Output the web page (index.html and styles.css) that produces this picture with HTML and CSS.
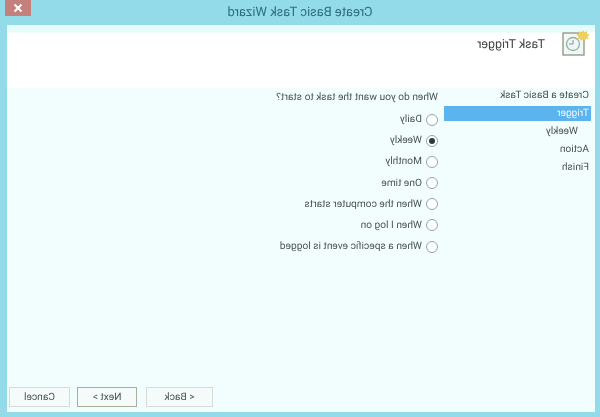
FILE: index.html
```html
<!DOCTYPE html>
<html>
<head>
  <title>Create Basic Task Wizard</title>
  <link rel="stylesheet" href="styles.css">
</head>
<body>
  <!-- The screenshot is a mirrored window, so the whole thing gets flipped -->
  <div class="window">
    <div class="titlebar">
      <span class="title">Create Basic Task Wizard</span>
      <div class="close">
        <svg width="10" height="10" viewBox="0 0 10 10">
          <path d="M1.5 1.5 L8.5 8.5 M8.5 1.5 L1.5 8.5" stroke="#fff" stroke-width="2" fill="none"/>
        </svg>
      </div>
    </div>
    <div class="client">
      <div class="header">
        <svg class="task-icon" width="24" height="26" viewBox="0 0 24 26">
          <rect x="1" y="3" width="21" height="22" fill="#f4f8f2" stroke="#8b9488" stroke-width="1.3"/>
          <circle cx="12" cy="14" r="6.5" fill="#eef7f6" stroke="#94b0aa" stroke-width="1.3"/>
          <path d="M12 10 V14 H16" stroke="#7f9490" stroke-width="1" fill="none"/>
          <path d="M2 0 L3.5 2.5 L6 1 L6 4 L9 4.5 L6.5 6.5 L8 9 L5 8.5 L4 11 L2 9 L0 11 L-1 8.5 L-4 9 L-2.5 6.5 L-5 4.5 L-2 4 L-2 1 L0.5 2.5 Z" fill="#f0cf5a"/>
        </svg>
        <span class="header-title">Task Trigger</span>
      </div>
      <div class="body">
        <ul class="steps">
          <li class="step">Create a Basic Task</li>
          <li class="step selected">Trigger</li>
          <li class="step sub">Weekly</li>
          <li class="step">Action</li>
          <li class="step">Finish</li>
        </ul>
        <div class="content">
          <p class="question">When do you want the task to start?</p>
          <div class="options">
            <label class="option"><span class="radio"></span>Daily</label>
            <label class="option"><span class="radio checked"></span>Weekly</label>
            <label class="option"><span class="radio"></span>Monthly</label>
            <label class="option"><span class="radio"></span>One time</label>
            <label class="option"><span class="radio"></span>When the computer starts</label>
            <label class="option"><span class="radio"></span>When I log on</label>
            <label class="option"><span class="radio"></span>When a specific event is logged</label>
          </div>
        </div>
      </div>
      <div class="buttons">
        <div class="btn back">&lt; Back</div>
        <div class="btn next">Next &gt;</div>
        <div class="btn cancel">Cancel</div>
      </div>
    </div>
  </div>
</body>
</html>
```

FILE: styles.css
```css
html, body {
  margin: 0;
  padding: 0;
}

body {
  width: 600px;
  height: 417px;
  overflow: hidden;
  font-family: Roboto, sans-serif;
  font-size: 10.2px;
  text-rendering: geometricPrecision;
  color: #4a5656;
  background-color: #93dbe9;
}

.window {
  width: 600px;
  height: 417px;
  display: flex;
  flex-direction: column;
  transform: scaleX(-1);
  filter: blur(0.3px);
}

.titlebar {
  height: 25px;
  flex-shrink: 0;
  display: flex;
  justify-content: center;
  align-items: center;
  position: relative;
}

.title {
  font-size: 12.9px;
  color: #2f6e80;
  padding-bottom: 1px;
}

.close {
  position: absolute;
  top: 0;
  right: 5px;
  width: 26px;
  height: 16px;
  background-color: #c5807c;
  display: flex;
  justify-content: center;
  align-items: center;
}

.client {
  flex: 1;
  margin: 0 7px 5px 5px;
  background-color: #f2fdfd;
  display: flex;
  flex-direction: column;
  position: relative;
}

.header {
  height: 63px;
  flex-shrink: 0;
  background: linear-gradient(#e4fafa, #e8fbfb 7px, #fff 8px);
  box-sizing: border-box;
  display: flex;
  align-items: flex-start;
}

.task-icon {
  margin: 5px 0 0 10px;
  overflow: visible;
}

.header-title {
  font-size: 12.4px;
  color: #444;
  margin: 12px 0 0 16px;
}

.body {
  flex: 1;
  display: flex;
}

.steps {
  list-style: none;
  width: 151px;
  margin: 0;
  padding: 0;
  flex-shrink: 0;
}

.step {
  height: 18px;
  line-height: 20px;
  padding-left: 6px;
}

.step:first-child {
  height: 17px;
  line-height: 16px;
}

.selected {
  width: 147px;
  height: 15px;
  line-height: 15px;
  margin: 1px 0 1px 4px;
  padding-left: 2px;
  box-sizing: border-box;
  background-color: #5cb4ee;
  color: #eef8ff;
}

.sub {
  padding-left: 17px;
}

.content {
  flex: 1;
  padding-left: 6px;
}

.question {
  margin: 0;
  height: 18px;
  line-height: 20px;
}

.options {
  display: flex;
  flex-direction: column;
  gap: 4.2px;
  margin-top: 5px;
}

.option {
  height: 17px;
  line-height: 19px;
  display: flex;
  align-items: center;
  gap: 4px;
}

.radio {
  width: 12px;
  height: 12px;
  box-sizing: border-box;
  border: 1px solid #9aa6a6;
  border-radius: 50%;
  background-color: #fbffff;
  display: flex;
  justify-content: center;
  align-items: center;
}

.radio.checked::after {
  content: "";
  width: 6px;
  height: 6px;
  border-radius: 50%;
  background-color: #2d3a3a;
}

.buttons {
  height: 25px;
  flex-shrink: 0;
  display: flex;
  align-items: flex-start;
  padding-left: 382px;
}

.btn {
  height: 20px;
  padding-top: 1px;
  box-sizing: border-box;
  display: flex;
  justify-content: center;
  align-items: center;
  border: 1px solid #d3dcd8;
  background-color: #f4fbf9;
  color: #4a5656;
}

.back {
  width: 67px;
}

.next {
  width: 60px;
  margin-left: 9px;
  border-color: #a8ada0;
}

.cancel {
  width: 61px;
  margin-left: 7px;
}
```
